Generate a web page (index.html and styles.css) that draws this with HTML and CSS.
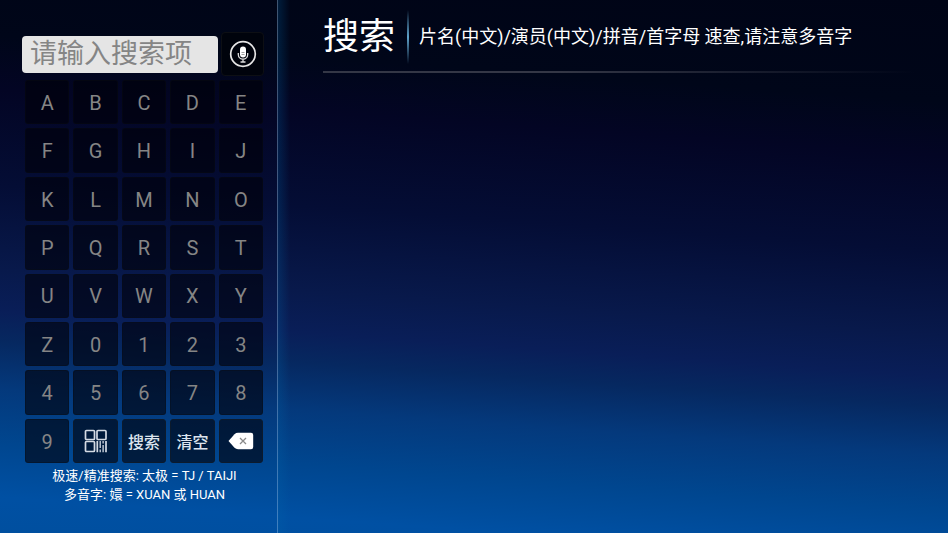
FILE: index.html
```html
<!DOCTYPE html>
<html lang="zh-CN">
<head>
<meta charset="utf-8">
<meta name="viewport" content="width=device-width, initial-scale=1">
<title>搜索</title>
<link rel="stylesheet" href="styles.css">
</head>
<body>
<div class="app">
  <aside class="sidebar">
    <form class="search" role="search">
      <input class="search-input" type="text" aria-label="搜索项" placeholder="请输入搜索项">
      <button class="voice" type="button" aria-label="语音搜索">
        <svg viewBox="0 0 28 28" width="28" height="28" aria-hidden="true">
          <circle cx="14" cy="14" r="12.3" fill="none" stroke="#e6e6e6" stroke-width="1.7"/>
          <rect x="11" y="6.500" width="6" height="11" rx="3" fill="#fff"/>
          <path d="M9.300 13v1.500a4.700 4.700 0 0 0 9.400 0V13M14 19.200v2.600M11.500 22h5" fill="none" stroke="#ddd" stroke-width="1.300"/>
          <path d="M12.500 12.500h3M12.500 14.500h3" stroke="#777" stroke-width=".7"/>
        </svg>
      </button>
    </form>
    <div class="keys">
      <button class="key">A</button><button class="key">B</button><button class="key">C</button><button class="key">D</button><button class="key">E</button>
      <button class="key">F</button><button class="key">G</button><button class="key">H</button><button class="key">I</button><button class="key">J</button>
      <button class="key">K</button><button class="key">L</button><button class="key">M</button><button class="key">N</button><button class="key">O</button>
      <button class="key">P</button><button class="key">Q</button><button class="key">R</button><button class="key">S</button><button class="key">T</button>
      <button class="key">U</button><button class="key">V</button><button class="key">W</button><button class="key">X</button><button class="key">Y</button>
      <button class="key">Z</button><button class="key">0</button><button class="key">1</button><button class="key">2</button><button class="key">3</button>
      <button class="key">4</button><button class="key">5</button><button class="key">6</button><button class="key">7</button><button class="key">8</button>
      <button class="key">9</button>
      <button class="key action" aria-label="二维码">
        <svg viewBox="0 0 24 24" width="24" height="24" aria-hidden="true" fill="none" stroke="#d3dae4" stroke-width="1.700">
          <rect x="1.500" y="1.500" width="9" height="9" rx="1"/>
          <rect x="13" y="1.500" width="9" height="9" rx="1"/>
          <rect x="1.500" y="12.500" width="9" height="10" rx="1"/>
          <path d="M13.300 12v11.300M22 12v11.300"/>
          <path d="M16.200 12v7M16.200 20.500v2.800M19.100 12v2.500M19.100 16v7.300" stroke-width="1.300"/>
        </svg>
      </button>
      <button class="key action">搜索</button>
      <button class="key action">清空</button>
      <button class="key action" aria-label="退格">
        <svg viewBox="0 0 26 18" width="26" height="18" aria-hidden="true">
          <path d="M.5 9 6.500 2.200Q8 .8 10 .8H23Q25.200.8 25.200 3V15Q25.200 17.200 23 17.200H10Q8 17.200 6.500 15.800Z" fill="#fff"/>
          <path d="m12 6 6 6m0-6-6 6" stroke="#8a8a8a" stroke-width="1.300"/>
        </svg>
      </button>
    </div>
    <p class="hint">极速/精准搜索: 太极 = TJ / TAIJI<br>多音字: 嬛 = XUAN 或 HUAN</p>
  </aside>
  <main class="content">
    <header class="header">
      <h1 class="title">搜索</h1>
      <span class="divider"></span>
      <p class="subtitle">片名(中文)/演员(中文)/拼音/首字母 速查,请注意多音字</p>
    </header>
  </main>
</div>
</body>
</html>
```
FILE: styles.css
```css
* {
  box-sizing: border-box;
}

body {
  margin: 0;
  font-family: Roboto, "Noto Sans CJK SC", sans-serif;
  color: #fff;
}

.app {
  display: flex;
  min-height: 100vh;
  background: linear-gradient(184deg, #000416 0%, #000619 17%, #030524 26%, #040d35 42%, #08194b 56%, #091e58 63%, #062860 68%, #04397c 76%, #00468f 85%, #0050a3 94%, #004f9f 100%);
}

.sidebar {
  flex: 0 0 278px;
  min-width: 0;
  padding: 32px 13px 0 22px;
  border-right: 1px solid rgba(140, 185, 225, 0.45);
}

.search {
  display: flex;
  align-items: center;
  gap: 3px;
}

.search-input {
  flex: 1;
  min-width: 0;
  height: 37px;
  padding: 0 8px;
  border: 0;
  border-radius: 4px;
  background: #e5e5e5;
  color: #444;
  font: 27px Roboto, "Noto Sans CJK SC", sans-serif;
}

.search-input::placeholder {
  color: #858585;
  opacity: 1;
}

.voice {
  display: grid;
  place-items: center;
  width: 43px;
  height: 44px;
  padding: 0;
  border: 1px solid #0d0f14;
  border-radius: 4px;
  background: #00030c;
}

.keys {
  display: grid;
  grid-template-columns: repeat(5, minmax(0, 1fr));
  gap: 4px;
  margin: 4px 1px 0 3px;
}

.key {
  display: grid;
  place-items: center;
  aspect-ratio: 1;
  min-width: 0;
  padding: 1px 0 0;
  border: 1px solid rgba(10, 12, 18, 0.4);
  border-radius: 3px;
  background: rgba(0, 0, 8, 0.6);
  color: #858585;
  font: 20px Roboto, "Noto Sans CJK SC", sans-serif;
}

.action {
  padding: 0;
  border-color: #0c1a2c;
  color: #dce4ee;
  font-size: 16px;
  font-weight: 500;
}

.hint {
  margin: 3px 0 0 3px;
  text-align: center;
  font-size: 13px;
  line-height: 19px;
}

.content {
  flex: 1;
  min-width: 0;
  padding: 10px 34px 0 45px;
  background: linear-gradient(90deg, rgba(0, 100, 170, 0.25), rgba(0, 100, 170, 0) 12px);
}

.header {
  display: flex;
  align-items: flex-start;
  height: 63px;
  border-bottom: 2px solid;
  border-image: linear-gradient(90deg, #343746, #343746 40%, transparent) 1;
}

.title {
  margin: 0;
  font-size: 36px;
  font-weight: 400;
  line-height: 54px;
  white-space: nowrap;
}

.divider {
  width: 2px;
  height: 54px;
  margin: 0 10px 0 12px;
  background: linear-gradient(transparent, #5fa3cb 50%, transparent);
}

.subtitle {
  margin: 0;
  font-size: 18px;
  line-height: 54px;
}
```
